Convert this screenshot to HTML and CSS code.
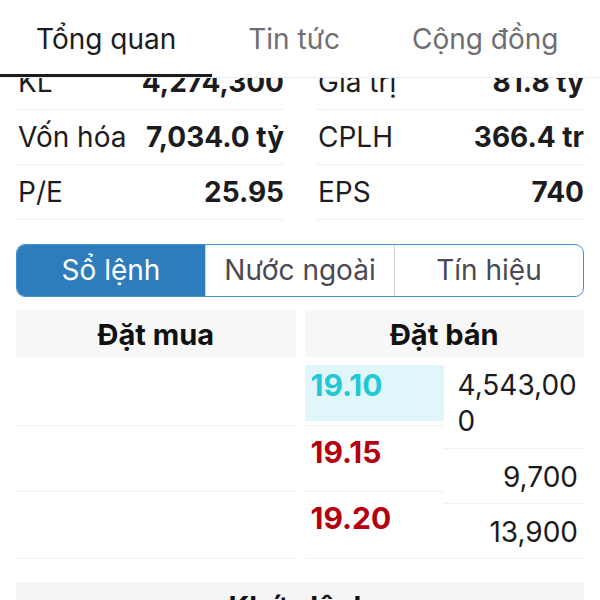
FILE: index.html
```html
<!DOCTYPE html>
<html lang="vi">
<head>
    <meta charset="UTF-8">
    <meta name="viewport" content="width=device-width, initial-scale=1.0">
    <title>Tổng quan</title>
    <link rel="stylesheet" href="styles.css">
</head>
<body>
    <div class="screen">
        <!-- Top tabs -->
        <nav class="tabs">
            <div class="tab active">Tổng quan</div>
            <div class="tab">Tin tức</div>
            <div class="tab">Cộng đồng</div>
        </nav>

        <div class="viewport">
            <div class="content">
                <!-- Stock stats -->
                <div class="stats">
                    <div class="stats-col">
                        <div class="stat-row"><span class="label">KL</span><span class="value">4,274,300</span></div>
                        <div class="stat-row"><span class="label">Vốn hóa</span><span class="value">7,034.0 tỷ</span></div>
                        <div class="stat-row"><span class="label">P/E</span><span class="value">25.95</span></div>
                    </div>
                    <div class="stats-col">
                        <div class="stat-row"><span class="label">Giá trị</span><span class="value">81.8 tỷ</span></div>
                        <div class="stat-row"><span class="label">CPLH</span><span class="value">366.4 tr</span></div>
                        <div class="stat-row"><span class="label">EPS</span><span class="value">740</span></div>
                    </div>
                </div>

                <!-- Segmented control -->
                <div class="segmented">
                    <div class="segment active">Sổ lệnh</div>
                    <div class="segment">Nước ngoài</div>
                    <div class="segment">Tín hiệu</div>
                </div>

                <!-- Order book -->
                <div class="orderbook">
                    <div class="book-side">
                        <div class="book-head">Đặt mua</div>
                        <div class="book-row first"></div>
                        <div class="book-row"></div>
                        <div class="book-row last"></div>
                    </div>
                    <div class="book-side">
                        <div class="book-head">Đặt bán</div>
                        <div class="sell-grid">
                            <div class="price-col">
                                <div class="book-row first"><div class="price ref">19.10</div></div>
                                <div class="book-row"><div class="price up">19.15</div></div>
                                <div class="book-row last"><div class="price up">19.20</div></div>
                            </div>
                            <div class="qty-col">
                                <div class="qty wrap">4,543,000</div>
                                <div class="qty">9,700</div>
                                <div class="qty">13,900</div>
                            </div>
                        </div>
                    </div>
                </div>

                <div class="section-head">Khớp lệnh</div>
            </div>
        </div>
    </div>
</body>
</html>
```

FILE: styles.css
```css
/* General Reset */
* {
    margin: 0;
    padding: 0;
    box-sizing: border-box;
}
body {
    font-family: 'Inter', 'Liberation Sans', sans-serif;
    background-color: #fff;
    color: #1c1c1e;
}
.screen {
    width: 600px;
    height: 600px;
    display: flex;
    flex-direction: column;
    overflow: hidden;
}

/* Top tabs */
.tabs {
    display: flex;
    height: 77px;
    flex: none;
    background: #fff;
    box-shadow: 0 1px 0 #ececec;
    position: relative;
    z-index: 1;
}
.tab {
    padding: 22px 36px 0;
    font-size: 28px;
    line-height: 34px;
    color: #6e6e73;
    border-bottom: 3px solid transparent;
}
.tab.active {
    color: #1c1c1e;
    border-bottom-color: #1c1c1e;
}

/* Scrolled area */
.viewport {
    flex: 1;
    overflow: hidden;
}
.content {
    margin-top: -22px;
    padding: 0 16px;
}

/* Stats */
.stats {
    display: flex;
    gap: 32px;
}
.stats-col {
    flex: 1;
}
.stat-row {
    display: flex;
    justify-content: space-between;
    height: 55px;
    padding-top: 10px;
    border-bottom: 1px solid #efefef;
    font-size: 28px;
    line-height: 34px;
}
.stat-row .label {
    padding-left: 2px;
}
.stat-row .value {
    font-weight: bold;
}

/* Segmented control */
.segmented {
    display: flex;
    margin-top: 24px;
    height: 53px;
    border: 1.5px solid #4a90c8;
    border-radius: 9px;
    overflow: hidden;
}
.segment {
    flex: 1;
    text-align: center;
    font-size: 28px;
    line-height: 50px;
    color: #4a4a52;
    border-left: 1px solid #c9d6e2;
}
.segment:first-child {
    border-left: none;
}
.segment.active {
    background: #2d7dbd;
    color: #fff;
}

/* Order book */
.orderbook {
    display: flex;
    gap: 9px;
    margin-top: 13px;
}
.book-side {
    flex: 1;
}
.book-head {
    height: 47px;
    background: #f7f7f7;
    text-align: center;
    font-size: 29px;
    font-weight: bold;
    line-height: 50px;
    color: #111;
}
.book-row {
    height: 66px;
    border-bottom: 1px solid #f1f1f1;
}
.book-row.first {
    height: 69px;
    padding-top: 8px;
}
.book-row.last {
    height: 67px;
}
.sell-grid {
    display: flex;
}
.price-col {
    width: 139px;
}
.qty-col {
    flex: 1;
}
.price {
    padding: 8px 0 0 6px;
    font-size: 30px;
    font-weight: bold;
    line-height: 36px;
}
.price.ref {
    height: 56px;
    padding-top: 2px;
    background: #e0f6fa;
    color: #22c9d4;
}
.price.up {
    color: #b5000f;
}
.qty {
    height: 55px;
    padding: 10px 6px 0 14px;
    border-bottom: 1px solid #f1f1f1;
    font-size: 28px;
    line-height: 36px;
    text-align: right;
    word-break: break-all;
    color: #1c1c1e;
}
.qty.wrap {
    height: 92px;
    padding-top: 10px;
    text-align: left;
}

.section-head {
    margin-top: 23px;
    height: 47px;
    background: #f5f5f5;
    text-align: center;
    font-size: 29px;
    font-weight: bold;
    line-height: 50px;
    color: #111;
}
```
